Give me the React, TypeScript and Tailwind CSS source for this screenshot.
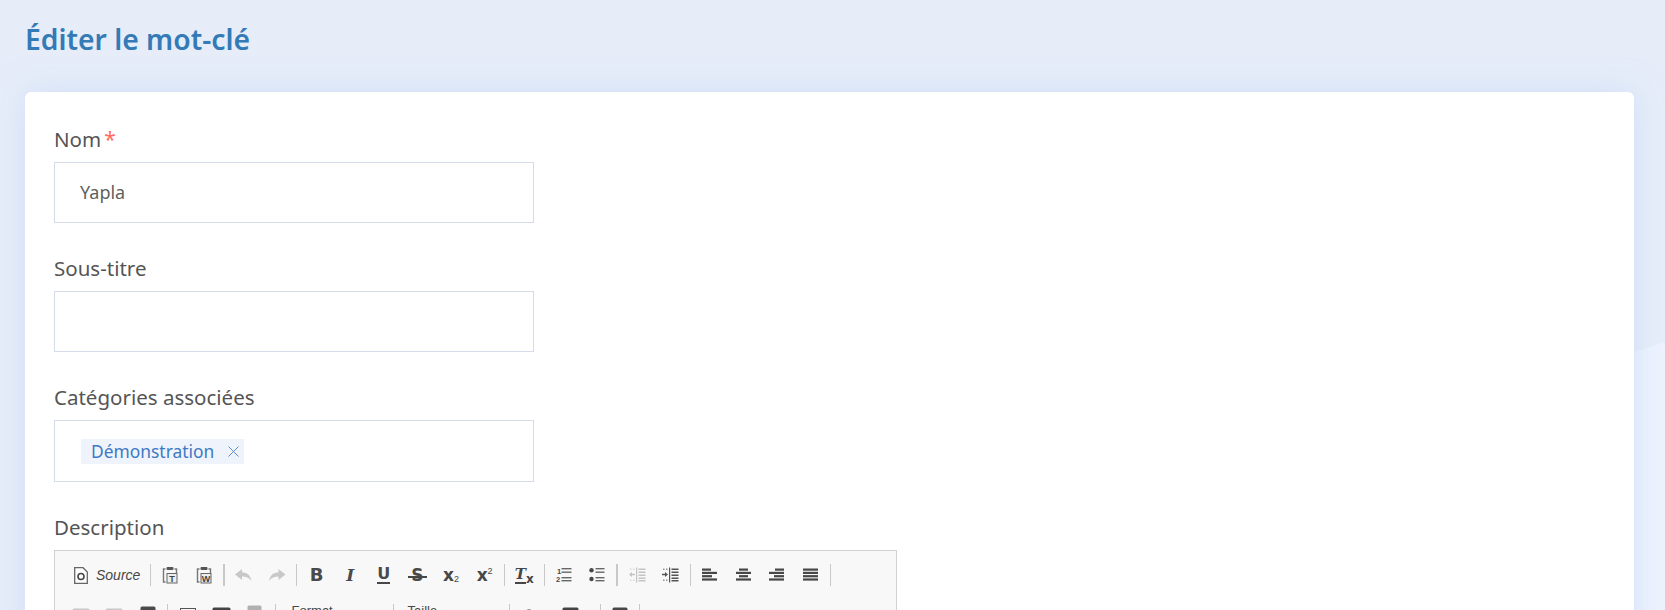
const fieldFont = { fontFamily: '"Noto Sans", Lato, sans-serif' };

const Sep = ({ thick, className = '' }: { thick?: boolean; className?: string }) => (
  <div className={`flex h-[22px] w-[6px] shrink-0 justify-center ${className}`}>
    <div className={thick ? 'h-full w-[2px] bg-[#c8c8c8]' : 'h-full w-px bg-[#c8c8c8]'} />
  </div>
);

const Btn = ({ children, className = '' }: { children?: React.ReactNode; className?: string }) => (
  <div className={`flex h-[22px] w-[33.6px] shrink-0 items-center justify-center text-[#474747] ${className}`}>{children}</div>
);

const Paste = ({ letter }: { letter: string }) => (
  <svg width="16" height="18" viewBox="0 0 16 18" fill="none">
    <path d="M3.5 3H1.5V16H3.5M12.5 3H14.5V7" stroke="#777" strokeWidth="1.4" />
    <rect x="4.5" y="1" width="7" height="3" rx="1" fill="#555" />
    <rect x="5" y="7.5" width="10" height="9.5" fill="#eee" stroke="#666" />
    <text x="10" y="15.5" textAnchor="middle" fontSize="9" fontWeight="700" fontFamily="Liberation Sans" fill="#444">{letter}</text>
  </svg>
);

const Lines = ({ rows, color = '#474747' }: { rows: [number, number][]; color?: string }) => (
  <svg width="16" height="14" viewBox="0 0 16 14">
    {rows.map(([x, w], i) => (
      <rect key={i} x={x} y={i * 3.3 + 0.5} width={w} height="2.2" fill={color} />
    ))}
  </svg>
);

const Indent = ({ flip, color }: { flip?: boolean; color: string }) => (
  <svg width="17" height="16" viewBox="0 0 17 16">
    <rect x="7" y="0.5" width="1.2" height="15" fill={color} />
    {[1.5, 4.5, 7.5, 10.5, 13].map((y) => (
      <rect key={y} x="9.5" y={y} width="7" height="1.5" fill={color} />
    ))}
    <rect x="1" y="1.5" width="1.5" height="1.5" fill={color} opacity="0.6" />
    <rect x="4" y="1.5" width="1.5" height="1.5" fill={color} opacity="0.6" />
    <rect x="1" y="12.5" width="1.5" height="1.5" fill={color} opacity="0.6" />
    <rect x="4" y="12.5" width="1.5" height="1.5" fill={color} opacity="0.6" />
    {flip ? (
      <path d="M0 7.5L3 5V6.8H6V8.2H3V10Z" fill={color} />
    ) : (
      <path d="M6 7.5L3 5V6.8H0V8.2H3V10Z" fill={color} />
    )}
  </svg>
);

// top edge of the second toolbar row, only a few pixels show above the fold
const Row2Icon = ({ mt, w, color, outline }: { mt: number; w: number; color: string; outline?: boolean }) => (
  <svg width={w} height="22" viewBox={`0 0 ${w} 22`}>
    <rect
      x="0.5"
      y={mt + 0.5}
      width={w - 1}
      height="14"
      rx={outline ? 0 : 1.5}
      fill={outline ? 'none' : color}
      stroke={outline ? color : 'none'}
    />
  </svg>
);

export default function App() {
  return (
    <div className="relative h-[610px] overflow-hidden bg-[#e6edf9]" style={fieldFont}>
      <svg className="absolute inset-0" width="1665" height="610" viewBox="0 0 1665 610">
        <path d="M1500 395L1665 342V610H1500Z" fill="#edf2fd" />
      </svg>
      <div className="relative pl-[25px] pr-[31px] pt-[20px]">
        <h1 className="h-[72px] text-[28.3px] font-semibold leading-[38px] text-[#337ab7]">Éditer le mot-clé</h1>
        <div className="rounded-[6px] bg-white pl-[29px] pt-[31px] pb-10 shadow-[0_0_30px_rgba(190,212,245,0.55)]">
          <div className="mb-[6px] text-[20.5px] leading-[33px] text-[#555]">
            Nom<span className="ml-[3px] text-[21px] text-[#ff6b5e]">*</span>
          </div>
          <div className="flex h-[61px] w-[480px] items-center border border-[#d4dce9] pl-[25px] text-[18px] text-[#5f5f5f]">Yapla</div>

          <div className="mb-[6px] mt-[29px] text-[20.5px] leading-[33px] text-[#555]">Sous-titre</div>
          <div className="h-[61px] w-[480px] border border-[#d4dce9]" />

          <div className="mb-[6px] mt-[29px] text-[20.5px] leading-[33px] text-[#555]">Catégories associées</div>
          <div className="flex h-[62px] w-[480px] items-center border border-[#d4dce9] pl-[26px]">
            <div className="flex h-[25px] w-[163px] items-center bg-[#eff4fc] pl-[10px] text-[17.4px] text-[#3f78c3]">
              Démonstration
              <svg className="ml-[14px]" width="11" height="11" viewBox="0 0 11 11">
                <path d="M0.5 0.5L10.5 10.5M10.5 0.5L0.5 10.5" stroke="#5f8bc8" strokeWidth="1" />
              </svg>
            </div>
          </div>

          <div className="mb-[6px] mt-[29px] text-[20.5px] leading-[33px] text-[#555]">Description</div>
          <div className="h-[200px] w-[843px] border border-[#d1d1d1] bg-[#f8f8f8] pl-[9px] pt-[13px]">
            <div className="flex h-[40px] items-start">
              <div className="flex h-[22px] w-[83.5px] shrink-0 items-center pl-[10px] text-[#474747]">
                <svg width="14" height="17" viewBox="0 0 14 17" fill="none">
                  <path d="M0.7 0.7H9L13.3 5V16.3H0.7Z" fill="#fff" stroke="#666" strokeWidth="1.3" />
                  <circle cx="7" cy="9.5" r="3" stroke="#444" strokeWidth="1.6" />
                </svg>
                <span className="ml-[8px] text-[14px] italic text-[#474747]" style={{ fontFamily: '"Liberation Sans", sans-serif' }}>Source</span>
              </div>
              <Sep />
              <Btn><Paste letter="T" /></Btn>
              <Btn><Paste letter="W" /></Btn>
              <Sep thick />
              <Btn>
                <svg width="17" height="13" viewBox="0 0 17 13"><path d="M0 5.5L7 0V3.5C12 3.5 15.5 6 16.5 12C14 8.5 11 7.5 7 7.5V11Z" fill="#c8c8c8" /></svg>
              </Btn>
              <Btn>
                <svg width="17" height="13" viewBox="0 0 17 13"><path d="M16.5 5.5L9.5 0V3.5C4.5 3.5 1 6 0 12C2.5 8.5 5.5 7.5 9.5 7.5V11Z" fill="#c8c8c8" /></svg>
              </Btn>
              <Sep />
              <Btn><span className="text-[18px] font-bold leading-none text-[#4a4a4a]" style={{ fontFamily: '"DejaVu Sans", sans-serif' }}>B</span></Btn>
              <Btn><span className="text-[17px] font-bold italic leading-none text-[#4a4a4a]" style={{ fontFamily: '"DejaVu Serif", serif' }}>I</span></Btn>
              <Btn><span className="border-b-2 border-[#474747] text-[16px] font-bold leading-[16px] text-[#4a4a4a]" style={{ fontFamily: '"DejaVu Sans", sans-serif' }}>U</span></Btn>
              <Btn>
                <span className="relative text-[17px] font-bold leading-none text-[#4a4a4a]" style={{ fontFamily: '"DejaVu Sans", sans-serif' }}>
                  S
                  <span className="absolute left-[-3px] right-[-3px] top-[9px] h-[2px] bg-[#474747]" />
                </span>
              </Btn>
              <Btn>
                <span className="text-[17px] font-bold leading-none" style={{ fontFamily: '"DejaVu Sans", sans-serif' }}>x</span>
                <span className="mt-[8px] text-[9px] leading-none" style={{ fontFamily: '"Liberation Sans", sans-serif' }}>2</span>
              </Btn>
              <Btn>
                <span className="text-[17px] font-bold leading-none" style={{ fontFamily: '"DejaVu Sans", sans-serif' }}>x</span>
                <span className="mb-[8px] text-[9px] leading-none" style={{ fontFamily: '"Liberation Sans", sans-serif' }}>2</span>
              </Btn>
              <Sep />
              <Btn>
                <span className="border-b-2 border-[#474747] text-[15px] font-bold italic leading-[15px]" style={{ fontFamily: '"DejaVu Serif", serif' }}>T</span>
                <span className="mt-[8px] text-[12px] font-bold leading-none" style={{ fontFamily: '"DejaVu Sans", sans-serif' }}>x</span>
              </Btn>
              <Sep />
              <Btn>
                <svg width="16" height="16" viewBox="0 0 16 16">
                  <text x="1" y="7" fontSize="7.5" fontFamily="Liberation Sans" fontWeight="700" fill="#474747">1</text>
                  <text x="0" y="15" fontSize="7.5" fontFamily="Liberation Sans" fontWeight="700" fill="#474747">2</text>
                  <rect x="5.5" y="1" width="10" height="1.4" fill="#666" /><rect x="5.5" y="4.5" width="10" height="1.4" fill="#666" />
                  <rect x="5.5" y="10" width="10" height="1.4" fill="#666" /><rect x="5.5" y="13" width="10" height="1.4" fill="#666" />
                </svg>
              </Btn>
              <Btn>
                <svg width="16" height="16" viewBox="0 0 16 16">
                  <circle cx="2.5" cy="3.2" r="2.2" fill="#474747" /><circle cx="2.5" cy="12" r="2.2" fill="#474747" />
                  <rect x="6.5" y="1" width="9" height="1.4" fill="#666" /><rect x="6.5" y="4.5" width="9" height="1.4" fill="#666" />
                  <rect x="6.5" y="10" width="9" height="1.4" fill="#666" /><rect x="6.5" y="13" width="9" height="1.4" fill="#666" />
                </svg>
              </Btn>
              <Sep thick />
              <Btn><Indent flip color="#c4c4c4" /></Btn>
              <Btn><Indent color="#555" /></Btn>
              <Sep />
              <Btn><Lines rows={[[0, 9], [0, 15], [0, 10], [0, 15]]} /></Btn>
              <Btn><Lines rows={[[3, 9], [0, 15], [3, 9], [0, 15]]} /></Btn>
              <Btn><Lines rows={[[6, 9], [0, 15], [5, 10], [0, 15]]} /></Btn>
              <Btn><Lines rows={[[0, 15], [0, 15], [0, 15], [0, 15]]} /></Btn>
              <Sep />
            </div>
            <div className="flex h-[22px] items-start">
              <Btn className="items-start"><Row2Icon mt={4} w={18} color="#c8c8c8" /></Btn>
              <Btn className="items-start"><Row2Icon mt={4} w={18} color="#c8c8c8" /></Btn>
              <Btn className="items-start"><Row2Icon mt={2} w={16} color="#4a4a4a" /></Btn>
              <Sep />
              <Btn className="items-start"><Row2Icon mt={4} w={16} color="#555" outline /></Btn>
              <Btn className="items-start"><Row2Icon mt={3} w={19} color="#444" /></Btn>
              <Btn className="items-start"><Row2Icon mt={1} w={15} color="#b0b0b0" /></Btn>
              <Sep className="ml-[1px]" />
              <div className="h-[22px] w-[112px] shrink-0 pl-[13px] text-[13px] leading-[14px] text-[#474747]" style={{ fontFamily: '"Liberation Sans", sans-serif' }}>Format</div>
              <Sep />
              <div className="h-[22px] w-[110px] shrink-0 pl-[11px] text-[13px] leading-[14px] text-[#474747]" style={{ fontFamily: '"Liberation Sans", sans-serif' }}>Taille</div>
              <Sep />
              <Btn className="items-start"><Row2Icon mt={5} w={6} color="#474747" /></Btn>
              <div className="flex h-[22px] w-[51px] shrink-0 items-start pl-[16px]"><Row2Icon mt={3} w={17} color="#444" /></div>
              <Sep />
              <Btn className="items-start"><Row2Icon mt={3} w={16} color="#474747" /></Btn>
              <Sep />
            </div>
          </div>
        </div>
      </div>
    </div>
  );
}
